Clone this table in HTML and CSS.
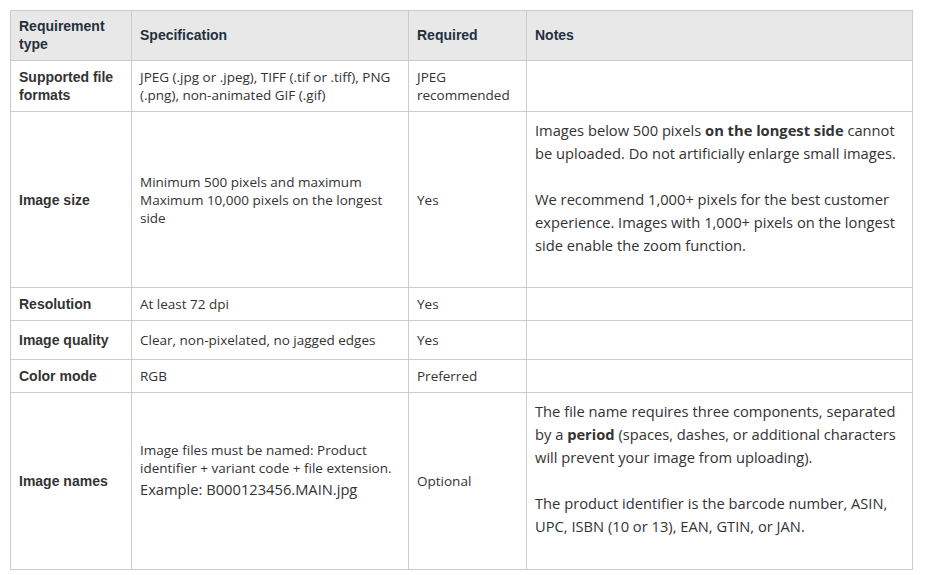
FILE: index.html
```html
<!DOCTYPE html>
<html>
<head>
<meta charset="utf-8">
<link rel="stylesheet" href="styles.css">
</head>
<body>
<table class="req">
  <colgroup>
    <col class="c1"><col class="c2"><col class="c3"><col class="c4">
  </colgroup>
  <thead>
    <tr>
      <th>Requirement type</th>
      <th>Specification</th>
      <th>Required</th>
      <th>Notes</th>
    </tr>
  </thead>
  <tbody>
    <tr>
      <td class="label">Supported file formats</td>
      <td>JPEG (.jpg or .jpeg), TIFF (.tif or .tiff), PNG (.png), non-animated GIF (.gif)</td>
      <td>JPEG recommended</td>
      <td></td>
    </tr>
    <tr>
      <td class="label">Image size</td>
      <td>Minimum 500 pixels and maximum Maximum 10,000 pixels on the longest side</td>
      <td>Yes</td>
      <td class="notes"><p>Images below 500 pixels <b>on the longest side</b> cannot be uploaded. Do not artificially enlarge small images.</p><p>We recommend 1,000+ pixels for the best customer experience. Images with 1,000+ pixels on the longest side enable the zoom function.</p></td>
    </tr>
    <tr>
      <td class="label">Resolution</td>
      <td>At least 72 dpi</td>
      <td>Yes</td>
      <td></td>
    </tr>
    <tr class="tall">
      <td class="label">Image quality</td>
      <td>Clear, non-pixelated, no jagged edges</td>
      <td>Yes</td>
      <td></td>
    </tr>
    <tr>
      <td class="label">Color mode</td>
      <td>RGB</td>
      <td>Preferred</td>
      <td></td>
    </tr>
    <tr class="last">
      <td class="label">Image names</td>
      <td><div>Image files must be named: Product identifier + variant code + file extension.</div><div class="example">Example: B000123456.MAIN.jpg</div></td>
      <td>Optional</td>
      <td class="notes"><p>The file name requires three components, separated by a <b>period</b> (spaces, dashes, or additional characters will prevent your image from uploading).</p><p>The product identifier is the barcode number, ASIN, UPC, ISBN (10 or 13), EAN, GTIN, or JAN.</p></td>
    </tr>
  </tbody>
</table>
</body>
</html>
```

FILE: styles.css
```css
html, body {
  margin: 0;
  padding: 0;
  background: #ffffff;
}

body {
  padding: 10px;
  font-family: "Open Sans", "Noto Sans", sans-serif;
  color: #333333;
}

.req {
  border-collapse: collapse;
  width: 903px;
  table-layout: fixed;
}

.c1 { width: 121px; }
.c2 { width: 277px; }
.c3 { width: 118px; }
.c4 { width: 386px; }

.req th,
.req td {
  border: 1px solid #cccccc;
  padding: 7px 8px;
  text-align: left;
  vertical-align: middle;
  font-size: 13.5px;
  line-height: 18px;
}

.req th {
  background: #e8e8e8;
  padding-top: 6px;
  font-family: "Liberation Sans", Arial, sans-serif;
  font-weight: bold;
  font-size: 14px;
  color: #232f3e;
}

.req td.label {
  font-family: "Liberation Sans", Arial, sans-serif;
  font-weight: bold;
  font-size: 14px;
  color: #333333;
}

.req tr.tall td {
  height: 24px;
}

.req tr.last td {
  padding-bottom: 8px;
}

.example {
  font-size: 14.7px;
  line-height: 24px;
  margin-bottom: 20px;
}

.req td.notes {
  font-size: 14.7px;
  line-height: 23px;
}

.notes p {
  margin: 0 0 23px;
}

.notes b {
  font-weight: bold;
}
```
